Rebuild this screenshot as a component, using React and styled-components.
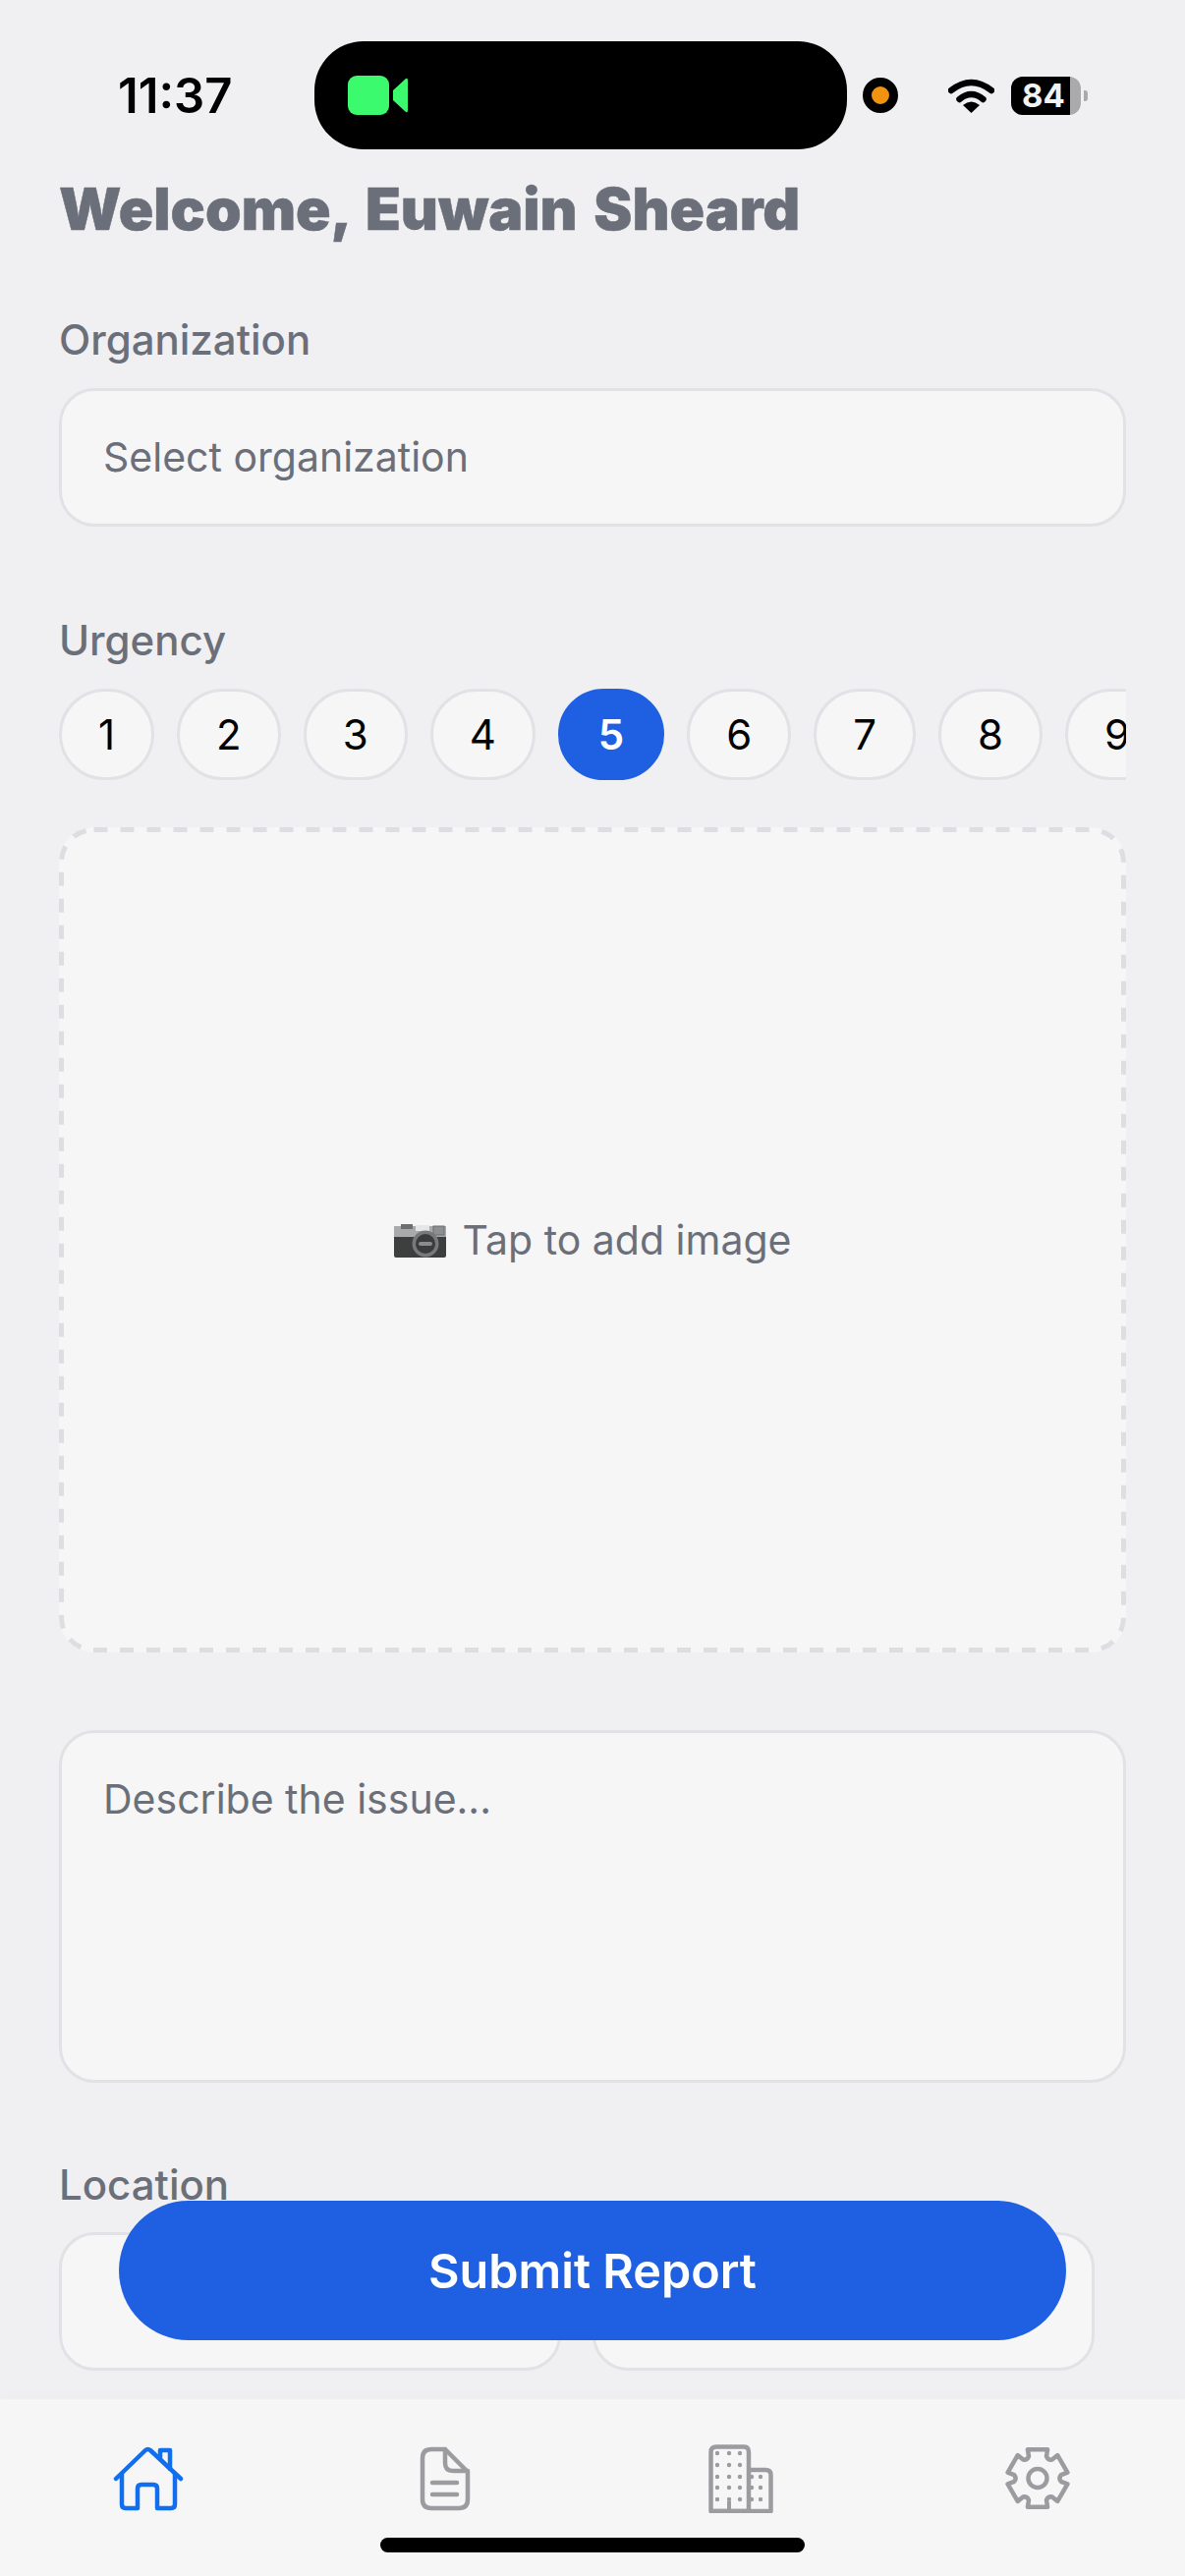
import React from "react";
import styled, { createGlobalStyle } from "styled-components";

const GlobalStyle = createGlobalStyle`
  html, body {
    margin: 0;
    padding: 0;
    background: #f0f0f3;
  }
  * {
    box-sizing: border-box;
  }
`;

const Screen = styled.div`
  position: relative;
  width: 1206px;
  height: 2622px;
  overflow: hidden;
  display: flex;
  flex-direction: column;
  background: #f0f0f3;
  font-family: Inter, "Noto Sans", sans-serif;
`;

const StatusBar = styled.div`
  display: flex;
  align-items: center;
  height: 110px;
  margin-top: 42px;
  padding-left: 120px;
  flex-shrink: 0;
`;

const Time = styled.div`
  width: 200px;
  font-size: 49px;
  font-weight: 600;
  color: #000;
`;

const Island = styled.div`
  width: 542px;
  height: 110px;
  border-radius: 50px;
  background: #000;
  display: flex;
  align-items: center;
  padding-left: 34px;
`;

const Mic = styled.div`
  width: 36px;
  height: 36px;
  margin-left: 16px;
  border-radius: 50%;
  background: #f0930f;
  border: 9px solid #000;
`;

const StatusIcons = styled.div`
  display: flex;
  align-items: center;
  margin-left: 51px;
  gap: 17px;
`;

const Battery = styled.div`
  width: 71px;
  height: 39px;
  border-radius: 12px;
  overflow: hidden;
  background: #aaaaac;
  display: flex;
  align-items: center;
`;

const BatteryFill = styled.div`
  height: 100%;
  width: 60px;
  background: #000;
  color: #f2f2f2;
  font-size: 33px;
  font-weight: 700;
  display: flex;
  align-items: center;
  justify-content: center;
  padding-left: 6px;
`;

const BatteryNub = styled.div`
  width: 4px;
  height: 11px;
  margin-left: 3px;
  border-radius: 0 3px 3px 0;
  background: #aaaaac;
`;

const Content = styled.div`
  flex: 1;
  min-height: 0;
  overflow: hidden;
  padding: 26px 60px 0;
`;

const Title = styled.h1`
  margin: 0;
  font-size: 58.7px;
  line-height: 70px;
  font-weight: 900;
  word-spacing: 5px;
  color: #6b6f7a;
  -webkit-text-stroke: 0.5px #6b6f7a;
`;

const Label = styled.div`
  margin-top: ${props => props.$top}px;
  font-size: 42px;
  line-height: 50px;
  font-weight: 530;
  color: #6b6f7a;
`;

const Field = styled.div`
  margin-top: ${props => props.$top}px;
  height: ${props => props.$height}px;
  padding: ${props => props.$pad}px 42px 0;
  border: 3px solid #e2e2e6;
  border-radius: 36px;
  background: #f6f6f7;
  font-size: 41px;
  line-height: 50px;
  color: #6b6f7a;
`;

const ChipRow = styled.div`
  display: flex;
  gap: 23px;
  width: 1086px;
  margin-top: 24px;
  overflow: hidden;
`;

const Chip = styled.div`
  flex-shrink: 0;
  height: 93px;
  padding: 0 ${props => (props.$active ? 38 : 37)}px;
  border-radius: 47px;
  display: flex;
  align-items: center;
  justify-content: center;
  font-size: 42px;
  font-weight: ${props => (props.$active ? 600 : 400)};
  background: ${props => (props.$active ? "#1f60e3" : "#f6f6f7")};
  color: ${props => (props.$active ? "#fff" : "#000")};
  border: 3px solid ${props => (props.$active ? "#1f60e3" : "#e2e2e6")};
`;

const ImageDrop = styled.div`
  position: relative;
  margin-top: 48px;
  height: 840px;
  border-radius: 36px;
  background: #f6f6f7;
  display: flex;
  align-items: center;
  justify-content: center;
  gap: 17px;
  font-size: 41px;
  color: #6b6f7a;
`;

const DashedEdge = styled.svg`
  position: absolute;
  top: 0;
  left: 0;
`;

const LocationRow = styled.div`
  display: grid;
  grid-template-columns: 511px 511px;
  gap: 32px;
  margin-top: 23px;
`;

const LocationField = styled.div`
  height: 141px;
  border: 3px solid #e2e2e6;
  border-radius: 36px;
  background: #f6f6f7;
`;

const SubmitButton = styled.button`
  position: absolute;
  left: 121px;
  top: 2240px;
  width: 964px;
  height: 142px;
  border: 0;
  border-radius: 71px;
  background: #1f60e3;
  color: #fff;
  font-family: inherit;
  font-size: 48.5px;
  font-weight: 600;
`;

const TabBar = styled.nav`
  position: relative;
  flex-shrink: 0;
  height: 180px;
  padding: 46px 0 0 115px;
  background: #f6f6f7;
  box-shadow: 0 -6px 14px rgba(0, 0, 0, 0.012);
  display: grid;
  grid-template-columns: 312px 294px 302px auto;
  align-items: start;
`;

const TabSlot = styled.div`
  margin-top: ${props => props.$top}px;
  display: flex;
`;

const HomeIndicator = styled.div`
  position: absolute;
  left: 387px;
  top: 141px;
  width: 432px;
  height: 15px;
  border-radius: 8px;
  background: #000;
`;

const CameraEmoji = () => (
  <svg width="53" height="35" viewBox="0 0 53 35">
    <rect x="0" y="3" width="53" height="32" rx="2" fill="#3d3f3e" />
    <rect x="0" y="3" width="53" height="11" fill="#a9aaac" />
    <rect x="7" y="1" width="12" height="5" fill="#6d6e70" />
    <rect x="22" y="2" width="14" height="6" fill="#e6e6e6" />
    <rect x="40" y="3" width="11" height="9" fill="#8d9092" stroke="#6b6d6f" />
    <circle cx="32" cy="21" r="13.5" fill="#77797b" />
    <circle cx="32" cy="21" r="10" fill="#3a3c3d" />
    <rect x="25" y="19" width="14" height="4" rx="2" fill="#8a8c8e" />
  </svg>
);

const VideoIcon = () => (
  <svg width="62" height="40" viewBox="0 0 62 40">
    <rect x="0" y="0" width="42" height="40" rx="9" fill="#3cfa6e" />
    <path d="M46 15 L59 3 Q61 2 61 5 V35 Q61 38 59 37 L46 25 Z" fill="#3cfa6e" />
  </svg>
);

const WifiIcon = () => (
  <svg width="47" height="35" viewBox="0 0 47 35">
    <path d="M3 12 Q23.5 -4 44 12" fill="none" stroke="#000" strokeWidth="6.5" strokeLinecap="round" />
    <path d="M11.5 21 Q23.5 11 35.5 21" fill="none" stroke="#000" strokeWidth="6.5" strokeLinecap="round" />
    <path d="M15 27 Q23.5 20 32 27 L23.5 35 Z" fill="#000" />
  </svg>
);

const HomeIcon = () => (
  <svg width="72" height="67" viewBox="0 0 72 67" fill="none" stroke="#116fee" strokeWidth="4.5" strokeLinecap="round" strokeLinejoin="round">
    <path d="M3 34 L33 5 Q35.5 3 38 5 L69 34" />
    <path d="M9 29 V60 Q9 64 13 64 H25 V44 Q25 40 29 40 H41 Q45 40 45 44 V64 H59 Q63 64 63 60 V29" />
    <path d="M48 14 V5 H58 V24" />
  </svg>
);

const DocIcon = () => (
  <svg width="52" height="67" viewBox="0 0 52 67" fill="none" stroke="#9c9ca0" strokeWidth="4.5" strokeLinecap="round" strokeLinejoin="round">
    <path d="M26 4 H12 Q3 4 3 13 V55 Q3 64 12 64 H40 Q49 64 49 55 V27 Z" />
    <path d="M26 4 V18 Q26 26 34 26 H49" />
    <path d="M13 38 H38" />
    <path d="M13 50 H38" />
  </svg>
);

const bigDots = [];
[9, 21, 33, 44, 56].forEach(y => [9, 21, 32].forEach(x => bigDots.push([x, y])));
const smallDots = [];
[33, 44, 56].forEach(y => [44, 53].forEach(x => smallDots.push([x, y])));

const BuildingIcon = () => (
  <svg width="66" height="70" viewBox="0 0 66 70" fill="none" stroke="#9c9ca0" strokeWidth="4.5" strokeLinejoin="round">
    <path d="M2.5 68 V8 Q2.5 2.5 8 2.5 H36 Q41 2.5 41 8 V68 Z" />
    <path d="M41 26 H58 Q63.5 26 63.5 31 V68 H2.5" />
    <path d="M21 68 V58" strokeWidth="4" />
    {[...bigDots, ...smallDots].map(([x, y]) => (
      <circle key={`${x}-${y}`} cx={x} cy={y} r="2.2" fill="#9c9ca0" stroke="none" />
    ))}
  </svg>
);

// six rounded teeth, curved valleys between them
const gearPath = () => {
  const cx = 33;
  const cy = 33.5;
  const pt = (deg, r) => {
    const a = ((deg - 90) * Math.PI) / 180;
    return `${(cx + r * Math.cos(a)).toFixed(1)} ${(cy + r * Math.sin(a)).toFixed(1)}`;
  };
  let d = "";
  for (let i = 0; i < 6; i++) {
    const a = i * 60;
    d += `${i === 0 ? "M" : "L"}${pt(a - 19, 31)} L${pt(a + 19, 31)} `;
    d += `L${pt(a + 22, 24)} Q${pt(a + 30, 21)} ${pt(a + 38, 24)} `;
  }
  return d + "Z";
};

const GearIcon = () => (
  <svg width="66" height="67" viewBox="0 0 66 67" fill="none" stroke="#9c9ca0" strokeWidth="4.5" strokeLinejoin="round">
    <path d={gearPath()} />
    <circle cx="33" cy="33.5" r="9.5" />
  </svg>
);

const urgencies = [1, 2, 3, 4, 5, 6, 7, 8, 9, 10];

const App = () => {
  return (
    <Screen>
      <GlobalStyle />
      <StatusBar>
        <Time>11:37</Time>
        <Island>
          <VideoIcon />
        </Island>
        <Mic />
        <StatusIcons>
          <WifiIcon />
          <Battery>
            <BatteryFill>84</BatteryFill>
          </Battery>
        </StatusIcons>
        <BatteryNub />
      </StatusBar>

      <Content>
        <Title>Welcome, Euwain Sheard</Title>

        <Label $top={73}>Organization</Label>
        <Field $top={24} $height={141} $pad={42}>Select organization</Field>

        <Label $top={91}>Urgency</Label>
        <ChipRow>
          {urgencies.map(n => (
            <Chip key={n} $active={n === 5}>{n}</Chip>
          ))}
        </ChipRow>

        <ImageDrop>
          <DashedEdge width="1086" height="840" viewBox="0 0 1086 840">
            <rect x="2.5" y="2.5" width="1081" height="835" rx="33" fill="none" stroke="#dedee2" strokeWidth="5" strokeDasharray="14 13" />
          </DashedEdge>
          <CameraEmoji />
          Tap to add image
        </ImageDrop>

        <Field $top={79} $height={359} $pad={42}>Describe the issue...</Field>

        <Label $top={79}>Location</Label>
        <LocationRow>
          <LocationField />
          <LocationField />
        </LocationRow>
      </Content>

      <SubmitButton>Submit Report</SubmitButton>

      <TabBar>
        <TabSlot $top={1}><HomeIcon /></TabSlot>
        <TabSlot $top={1}><DocIcon /></TabSlot>
        <TabSlot $top={0}><BuildingIcon /></TabSlot>
        <TabSlot $top={1}><GearIcon /></TabSlot>
        <HomeIndicator />
      </TabBar>
    </Screen>
  );
};

export default App;
